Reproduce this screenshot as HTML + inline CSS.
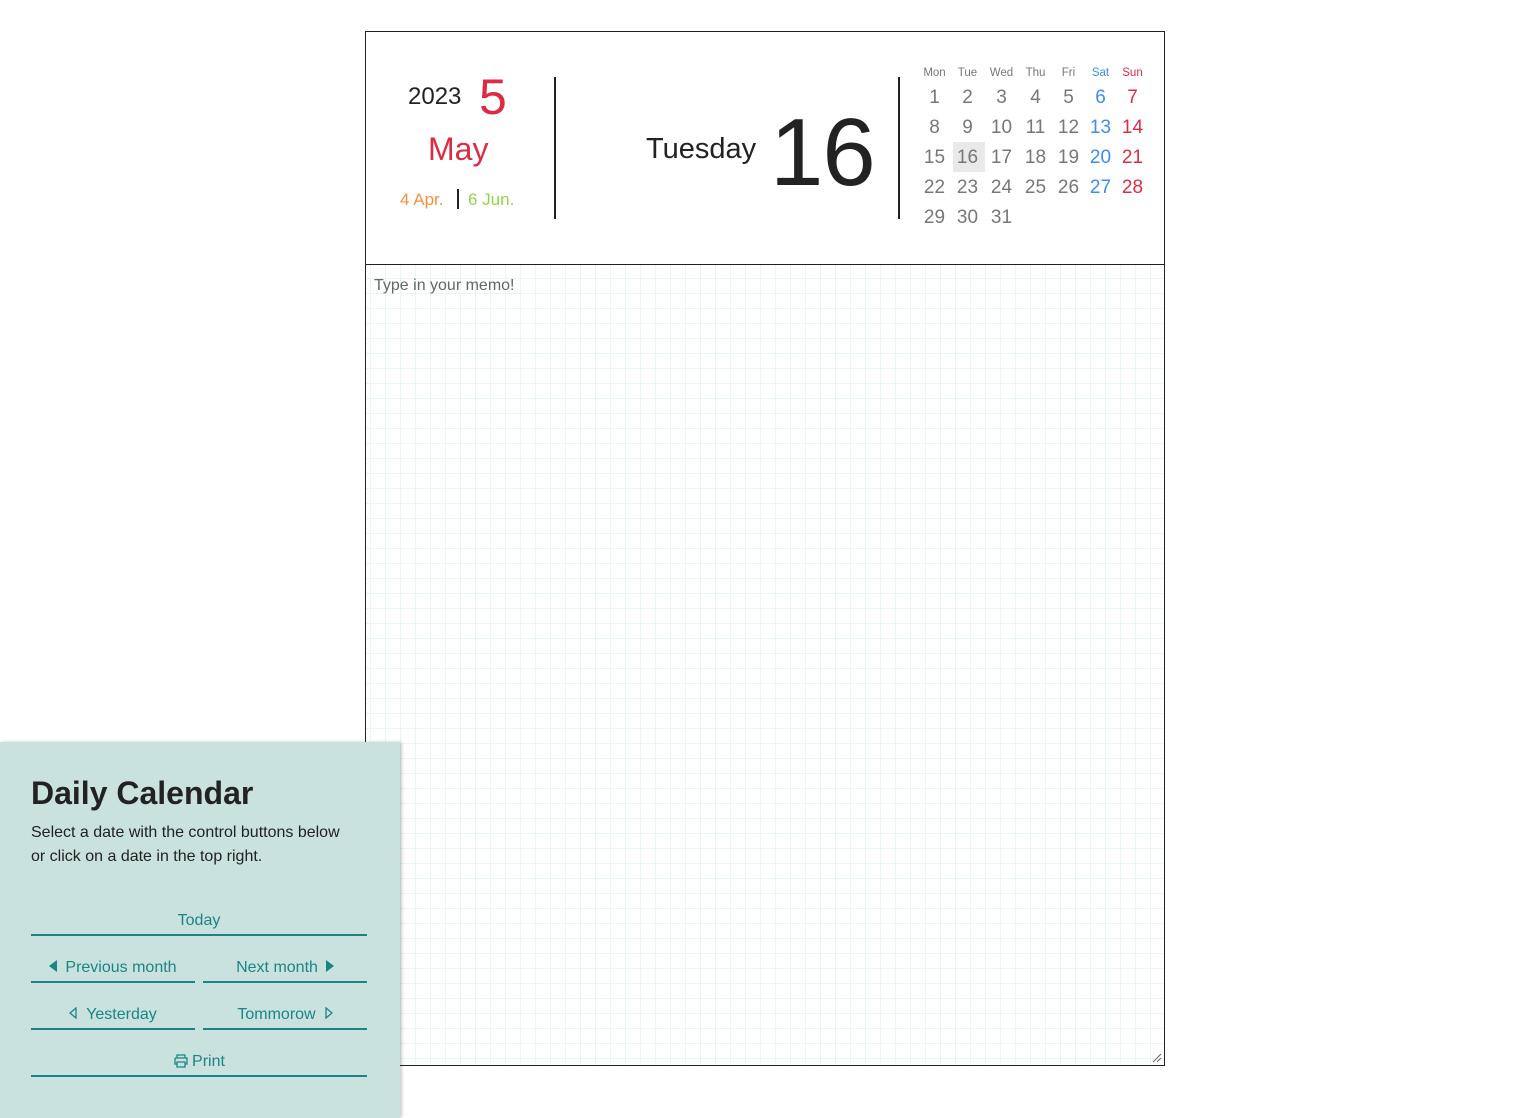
<!DOCTYPE html>
<html><head><meta charset="utf-8">
<style>
*{box-sizing:border-box;margin:0;padding:0}
body{width:1529px;height:1118px;background:#fff;font-family:"Liberation Sans","DejaVu Sans",sans-serif;position:relative;overflow:hidden;color:#212529}
.box{position:absolute;left:365px;top:31px;width:800px;height:1035px;border:1px solid #222}
.head{position:absolute;left:0;top:0;width:798px;height:233px;border-bottom:1px solid #222}
.memo{position:absolute;left:0;top:233px;width:798px;height:800px;
background-image:linear-gradient(#e8f7f6 1px,transparent 1px),linear-gradient(90deg,#e8f7f6 1px,transparent 1px);background-size:15px 15px;background-position:0 13px,4px 0}
.abs{position:absolute;white-space:nowrap}
.vl{position:absolute;width:1.5px;background:#222;top:45px;height:142px}
.cal{position:absolute;left:552px;top:30px}
.cal div{position:absolute;width:33px;text-align:center;color:#777}
.dow{font-size:11.5px}
.d{font-size:19px}
.sat{color:#3a8ef0!important}.sun{color:#dc2c45!important}
.panel{position:absolute;left:0;top:742px;width:400px;height:376px;background:#c9e2de;box-shadow:2px 0 3px rgba(0,0,0,.2)}
.btn{position:absolute;height:30px;border-bottom:2px solid #1a8585;color:#1a8585;font-size:16px;text-align:center;line-height:30px}
</style></head><body>
<div class="box">
 <div class="head">
  <div class="abs" style="left:42px;top:51px;font-size:24px;color:#222">2023</div>
  <div class="abs" style="left:113px;top:37px;font-size:50px;color:#dc2c45;line-height:56px">5</div>
  <div class="abs" style="left:62px;top:99px;font-size:32px;color:#dc2c45">May</div>
  <div class="abs" style="left:34px;top:158px;font-size:17px;color:#f7923a">4 Apr.</div>
  <div style="position:absolute;left:91px;top:157px;width:1.5px;height:20px;background:#222"></div>
  <div class="abs" style="left:102px;top:158px;font-size:17px;color:#93d34a">6 Jun.</div>
  <div class="vl" style="left:188px"></div>
  <div class="abs" style="left:280px;top:101px;font-size:29px;color:#222">Tuesday</div>
  <div class="abs" style="left:404px;top:66px;font-size:96px;color:#222;line-height:110px;letter-spacing:-1px">16</div>
  <div class="vl" style="left:532px"></div>
  <div class="cal">
   <div class="dow" style="left:0;top:5px">Mon</div><div class="dow" style="left:33px;top:5px">Tue</div><div class="dow" style="left:67px;top:5px">Wed</div><div class="dow" style="left:101px;top:5px">Thu</div><div class="dow" style="left:134px;top:5px">Fri</div><div class="dow sat" style="left:166px;top:5px">Sat</div><div class="dow sun" style="left:198px;top:5px">Sun</div>
   <div style="left:35px;top:80px;width:32px;height:30px;background:#e9e9e9"></div>
  </div>
 </div>
 <div class="memo"><div class="abs" style="left:8px;top:12px;font-size:16px;color:#666">Type in your memo!</div>
 <svg style="position:absolute;right:2px;bottom:2px" width="10" height="10"><path d="M9 1L1 9M9 5L5 9" stroke="#666" stroke-width="1"/></svg></div>
</div>
<div class="panel">
 <div class="abs" style="left:31px;top:33px;font-size:32px;font-weight:bold;color:#222">Daily Calendar</div>
 <div class="abs" style="left:31px;top:79px;font-size:16px;line-height:24px;color:#222">Select a date with the control buttons below<br>or click on a date in the top right.</div>
 <div class="btn" style="left:31px;top:164px;width:336px">Today</div>
 <div class="btn" style="left:31px;top:211px;width:164px"><svg width="8" height="12" style="margin-right:8px"><path d="M8 0L0 6L8 12Z" fill="#1a8585"/></svg>Previous month</div>
 <div class="btn" style="left:203px;top:211px;width:164px">Next month<svg width="8" height="12" style="margin-left:8px"><path d="M0 0L8 6L0 12Z" fill="#1a8585"/></svg></div>
 <div class="btn" style="left:31px;top:258px;width:164px"><svg width="8" height="12" style="margin-right:9px"><path d="M7 1L1 6L7 11Z" fill="none" stroke="#1a8585" stroke-width="1.3"/></svg>Yesterday</div>
 <div class="btn" style="left:203px;top:258px;width:164px">Tommorow<svg width="8" height="12" style="margin-left:9px"><path d="M1 1L7 6L1 11Z" fill="none" stroke="#1a8585" stroke-width="1.3"/></svg></div>
 <div class="btn" style="left:31px;top:305px;width:336px"><svg width="16" height="14" style="margin-right:3px;vertical-align:-2px"><path d="M4 4V1H12V4M2 4H14V10H12M4 10H2V4M4 8H12V13H4Z" fill="none" stroke="#1a8585" stroke-width="1.3"/></svg>Print</div>
</div>
<script>
var c=document.querySelector('.cal'),xs=[0,33,67,101,134,166,198];
for(var d=1;d<=31;d++){var i=d-1,col=i%7,row=Math.floor(i/7);var e=document.createElement('div');e.className='d'+(col==5?' sat':col==6?' sun':'');e.style.left=xs[col]+'px';e.style.top=(25+row*30)+'px';e.textContent=d;c.appendChild(e);}
</script>
</body></html>
